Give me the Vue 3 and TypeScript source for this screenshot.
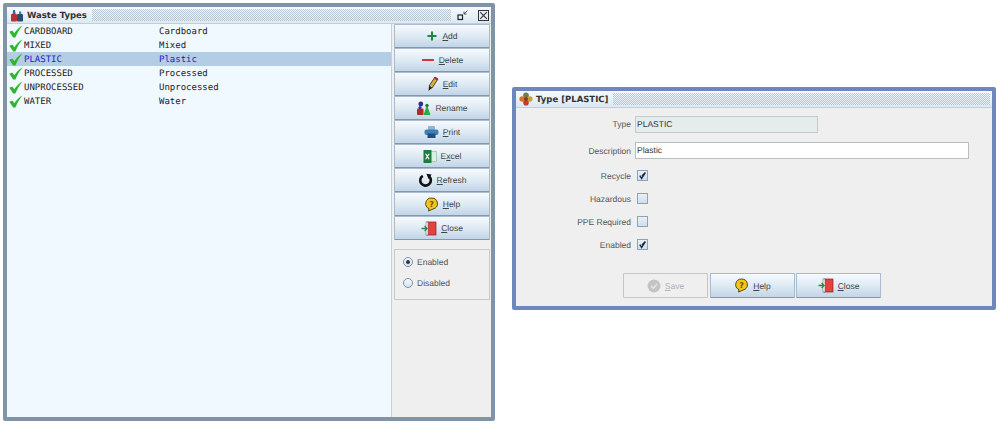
<script setup lang="ts">
interface WasteType {
  code: string
  description: string
}

const wasteTypes: WasteType[] = [
  { code: 'CARDBOARD', description: 'Cardboard' },
  { code: 'MIXED', description: 'Mixed' },
  { code: 'PLASTIC', description: 'Plastic' },
  { code: 'PROCESSED', description: 'Processed' },
  { code: 'UNPROCESSED', description: 'Unprocessed' },
  { code: 'WATER', description: 'Water' }
]

const sideButtons = [
  { id: 'add', pre: '', key: 'A', post: 'dd' },
  { id: 'delete', pre: '', key: 'D', post: 'elete' },
  { id: 'edit', pre: '', key: 'E', post: 'dit' },
  { id: 'rename', pre: 'Rename', key: '', post: '' },
  { id: 'print', pre: '', key: 'P', post: 'rint' },
  { id: 'excel', pre: 'E', key: 'x', post: 'cel' },
  { id: 'refresh', pre: '', key: 'R', post: 'efresh' },
  { id: 'help', pre: '', key: 'H', post: 'elp' },
  { id: 'close', pre: '', key: 'C', post: 'lose' }
]

const checks = [
  { label: 'Recycle', on: true },
  { label: 'Hazardous', on: false },
  { label: 'PPE Required', on: false },
  { label: 'Enabled', on: true }
]
</script>

<template>
  <div class="desktop">
    <section class="window list-window">
      <header class="titlebar">
        <svg class="title-icon" width="14" height="14" viewBox="0 0 14 14">
          <rect x="1" y="6" width="6" height="7.5" rx="1" fill="#b5322e" />
          <rect x="7" y="6" width="6" height="7.5" rx="1" fill="#27506f" />
          <path d="M2.5 6 L3.2 2 H5 L5.6 6 Z" fill="#2f6e9c" />
          <rect x="9" y="3.5" width="2.2" height="2.5" fill="#3c7ba6" />
        </svg>
        <span class="title-text">Waste Types</span>
        <span class="dots"></span>
        <svg class="ctl" width="12" height="12" viewBox="0 0 12 12">
          <rect x="1" y="6" width="4.5" height="4.5" fill="none" stroke="#222" stroke-width="1.2" />
          <path d="M7 5 L10.5 1.5 M7 2.5 V5 H9.5" fill="none" stroke="#444" stroke-width="0.9" />
        </svg>
        <svg class="ctl close-ctl" width="11" height="11" viewBox="0 0 11 11">
          <rect x="0.5" y="0.5" width="10" height="10" fill="#e8eef4" stroke="#333" />
          <path d="M2.2 2.2 L8.8 8.8 M8.8 2.2 L2.2 8.8" stroke="#333" stroke-width="1.1" />
        </svg>
      </header>
      <div class="list-body">
        <ul class="type-list">
          <li v-for="t in wasteTypes" :key="t.code" :class="['type-row', { selected: t.code === 'PLASTIC' }]">
            <svg class="tick" width="14" height="13" viewBox="0 0 14 13">
              <path d="M0.3 6.8 L3.2 5.4 L5.4 8.2 C7.4 5 9.8 2.4 13.4 0.4 C10.6 3.8 8.2 7.6 6.4 12.6 L4.2 12.6 Z" fill="#2fb62f" />
            </svg>
            <span class="code">{{ t.code }}</span>
            <span class="desc">{{ t.description }}</span>
          </li>
        </ul>
        <aside class="side">
          <button v-for="b in sideButtons" :key="b.id" class="btn side-btn" type="button">
            <svg v-if="b.id === 'add'" width="12" height="12" viewBox="0 0 12 12"><path d="M6 1.5 V10.5 M1.5 6 H10.5" stroke="#1c8a3a" stroke-width="2" /></svg>
            <svg v-else-if="b.id === 'delete'" width="14" height="12" viewBox="0 0 14 12"><path d="M1 6 H13" stroke="#d9333f" stroke-width="2" /></svg>
            <svg v-else-if="b.id === 'edit'" width="12" height="16" viewBox="0 0 12 16">
              <path d="M8 1 L11 3 L5 12 L2 10 Z" fill="#d8b23a" stroke="#222" stroke-width="0.8" />
              <path d="M8 1 L11 3 L10 4.6 L7 2.6 Z" fill="#b8282e" />
              <path d="M2 10 L5 12 L1.5 15 Z" fill="#222" />
            </svg>
            <svg v-else-if="b.id === 'rename'" width="15" height="15" viewBox="0 0 15 15">
              <circle cx="4.8" cy="3" r="2.4" fill="#2c2c9a" />
              <rect x="1" y="7.5" width="6.5" height="6.5" rx="1" fill="#b5262c" />
              <circle cx="4" cy="6.6" r="1.5" fill="#2c2c9a" />
              <path d="M11 4 L14.5 14 H7.5 Z" fill="#2aa84a" />
              <circle cx="11" cy="4.5" r="1.7" fill="#1c7d38" />
            </svg>
            <svg v-else-if="b.id === 'print'" width="15" height="14" viewBox="0 0 15 14">
              <rect x="4" y="1" width="7" height="4" rx="1" fill="#8fb3d1" />
              <rect x="0.5" y="4.5" width="14" height="5.5" rx="2" fill="#3f7fb5" />
              <rect x="3.5" y="8.5" width="8" height="4.5" fill="#1f4f7c" />
            </svg>
            <svg v-else-if="b.id === 'excel'" width="14" height="15" viewBox="0 0 14 15">
              <rect x="6" y="2.5" width="7.5" height="10" fill="#dbeee1" stroke="#7fbf95" stroke-width="0.6" />
              <rect x="0.5" y="1" width="8" height="13" fill="#1d7c41" />
              <path d="M2.6 4.8 L6.2 10.2 M6.2 4.8 L2.6 10.2" stroke="#fff" stroke-width="1.1" />
            </svg>
            <svg v-else-if="b.id === 'refresh'" width="15" height="15" viewBox="0 0 15 15">
              <path d="M4.8 2.8 A5.3 5.3 0 1 0 11.2 3.5" fill="none" stroke="#111" stroke-width="2.6" />
              <path d="M8.4 0.8 L13.6 1.4 L10.6 6 Z" fill="#111" />
            </svg>
            <svg v-else-if="b.id === 'help'" width="15" height="15" viewBox="0 0 15 15">
              <path d="M7.5 1 A6 5.6 0 0 1 9 12 L4.5 14 L5 11.6 A6 5.6 0 0 1 7.5 1 Z" fill="#f4c51f" stroke="#5a4708" stroke-width="1" />
              <text x="7.5" y="9.5" class="q">?</text>
            </svg>
            <svg v-else-if="b.id === 'close'" width="16" height="15" viewBox="0 0 16 15">
              <rect x="6" y="1" width="9" height="13" fill="#e5413f" stroke="#8e2220" stroke-width="0.7" />
              <rect x="5" y="1" width="2" height="13" fill="#fff" stroke="#555" stroke-width="0.5" />
              <path d="M0.5 7.5 H6 M3.6 5 L6 7.5 L3.6 10" fill="none" stroke="#2b8a3e" stroke-width="1.3" />
            </svg>
            <span class="btn-label">{{ b.pre }}<u v-if="b.key">{{ b.key }}</u>{{ b.post }}</span>
          </button>
          <div class="radio-box">
            <label class="radio-row"><span class="radio on"></span>Enabled</label>
            <label class="radio-row"><span class="radio"></span>Disabled</label>
          </div>
        </aside>
      </div>
    </section>

    <section class="window dialog-window">
      <header class="titlebar dialog-title">
        <svg class="title-icon" width="14" height="14" viewBox="0 0 14 14">
          <circle cx="7" cy="3.2" r="2.8" fill="#6d7f4b" />
          <circle cx="3.2" cy="7" r="2.8" fill="#d2762a" />
          <circle cx="10.8" cy="7" r="2.8" fill="#c9a032" />
          <circle cx="7" cy="10.8" r="2.8" fill="#c8382c" />
          <circle cx="7" cy="7" r="2" fill="#8c3a22" />
        </svg>
        <span class="title-text">Type [PLASTIC]</span>
        <span class="dots"></span>
      </header>
      <div class="dialog-body">
        <div class="field-row type-row-f">
          <span class="f-label">Type</span>
          <span class="readonly">PLASTIC</span>
        </div>
        <div class="field-row desc-row-f">
          <span class="f-label">Description</span>
          <span class="input">Plastic</span>
        </div>
        <div v-for="c in checks" :key="c.label" class="field-row check-row">
          <span class="f-label">{{ c.label }}</span>
          <span class="check">
            <svg v-if="c.on" width="9" height="9" viewBox="0 0 9 9"><path d="M1.8 4.6 L3.6 7.4 L7.4 1.6 L4 5" fill="none" stroke="#1d2a3a" stroke-width="1.4" /></svg>
          </span>
        </div>
        <div class="dialog-actions">
          <button class="btn action-btn disabled" type="button">
            <svg width="14" height="14" viewBox="0 0 14 14">
              <circle cx="7" cy="7" r="6.5" fill="#c4c4c4" />
              <path d="M4 7 L6.2 9.2 L10 5" fill="none" stroke="#e8e8e8" stroke-width="1.4" />
            </svg>
            <span class="btn-label"><u>S</u>ave</span>
          </button>
          <button class="btn action-btn" type="button">
            <svg width="15" height="15" viewBox="0 0 15 15">
              <path d="M7.5 1 A6 5.6 0 0 1 9 12 L4.5 14 L5 11.6 A6 5.6 0 0 1 7.5 1 Z" fill="#f4c51f" stroke="#5a4708" stroke-width="1" />
              <text x="7.5" y="9.5" class="q">?</text>
            </svg>
            <span class="btn-label"><u>H</u>elp</span>
          </button>
          <button class="btn action-btn" type="button">
            <svg width="16" height="15" viewBox="0 0 16 15">
              <rect x="6" y="1" width="9" height="13" fill="#e5413f" stroke="#8e2220" stroke-width="0.7" />
              <rect x="5" y="1" width="2" height="13" fill="#fff" stroke="#555" stroke-width="0.5" />
              <path d="M0.5 7.5 H6 M3.6 5 L6 7.5 L3.6 10" fill="none" stroke="#2b8a3e" stroke-width="1.3" />
            </svg>
            <span class="btn-label"><u>C</u>lose</span>
          </button>
        </div>
      </div>
    </section>
  </div>
</template>

<style>
html, body {
  margin: 0;
  background: #fff;
}
</style>

<style scoped>
.desktop {
  position: relative;
  width: 1000px;
  height: 424px;
  overflow: hidden;
  background: #fff;
  font-family: "Liberation Sans", Arial, sans-serif;
  font-size: 8.5px;
  color: #444;
  text-rendering: geometricPrecision;
}
.window {
  position: absolute;
  box-sizing: border-box;
  display: flex;
  flex-direction: column;
  border-radius: 2px;
}
.list-window {
  left: 3px;
  top: 3px;
  width: 492px;
  height: 418px;
  border: 4px solid #8193a7;
}
.dialog-window {
  left: 512px;
  top: 87px;
  width: 484px;
  height: 223px;
  border: 4px solid #6c88bf;
}
.titlebar {
  height: 17px;
  flex: none;
  display: flex;
  align-items: center;
  padding-left: 3px;
  background: linear-gradient(#f6fafd, #dce8f2);
  border-bottom: 1px solid #c4cdd6;
  box-sizing: border-box;
}
.title-icon {
  flex: none;
  margin-right: 3px;
}
.title-text {
  font-family: "DejaVu Sans", sans-serif;
  font-weight: 700;
  font-size: 8.5px;
  color: #333;
  white-space: nowrap;
  margin-right: 5px;
  padding-top: 2px;
}
.dots {
  flex: 1;
  align-self: stretch;
  margin: 2px 0;
  background: repeating-conic-gradient(#b9c8d6 0 25%, transparent 0 50%) 0 0 / 2px 2px;
}
.dialog-title .dots {
  margin-right: 2px;
}
.ctl {
  flex: none;
  margin-left: 6px;
}
.close-ctl {
  margin-left: 9px;
  margin-right: 2px;
}
.list-body {
  flex: 1;
  display: flex;
  min-height: 0;
}
.type-list {
  flex: 1;
  margin: 0;
  padding: 0;
  list-style: none;
  background: #f0f9ff;
  border-right: 1px solid #c9d0d6;
}
.type-row {
  box-sizing: border-box;
  height: 14px;
  display: flex;
  align-items: center;
  padding: 2px 0 0 2px;
  font-family: "DejaVu Sans Mono", monospace;
  font-size: 9px;
  color: #222;
  white-space: nowrap;
}
.type-row.selected {
  background: #b3cde4;
  color: #2420c8;
}
.tick {
  flex: none;
  margin: -2px 1px 0 0;
}
.code {
  width: 135px;
  flex: none;
}
.side {
  flex: none;
  width: 99px;
  box-sizing: border-box;
  background: #efeff0;
  padding-left: 2px;
}
.btn {
  box-sizing: border-box;
  display: flex;
  align-items: center;
  justify-content: center;
  gap: 4px;
  padding: 0;
  margin: 0;
  font-family: "Liberation Sans", Arial, sans-serif;
  font-size: 8.5px;
  color: #444;
  background: linear-gradient(#f6fafd, #e2ecf5 45%, #c2d5e7);
  border: 1px solid #a9bccf;
  border-bottom-color: #7f99b3;
  border-radius: 1px;
  text-rendering: geometricPrecision;
}
.btn u {
  text-underline-offset: 1px;
}
.side-btn {
  width: 96px;
  height: 24px;
}
.q {
  font-family: "DejaVu Sans", sans-serif;
  font-size: 8px;
  font-weight: 700;
  fill: #6a4e00;
  text-anchor: middle;
}
.radio-box {
  box-sizing: border-box;
  width: 96px;
  height: 51px;
  margin-top: 9px;
  padding: 5px 0 0 8px;
  display: flex;
  flex-direction: column;
  gap: 7px;
  background: #f0eff0;
  border: 1px solid #c9c9c9;
}
.radio-row {
  display: flex;
  align-items: center;
  gap: 4px;
  height: 14px;
  color: #555;
}
.radio {
  box-sizing: border-box;
  width: 10px;
  height: 10px;
  border-radius: 50%;
  border: 1px solid #7e93a8;
  background: linear-gradient(#f5f8fb, #d6e2ee);
  position: relative;
}
.radio.on::after {
  content: "";
  position: absolute;
  left: 2px;
  top: 2px;
  width: 4px;
  height: 4px;
  border-radius: 50%;
  background: #2a3545;
}
.dialog-body {
  flex: 1;
  display: flex;
  flex-direction: column;
  background: #efefef;
  padding-top: 7px;
  box-sizing: border-box;
  min-height: 0;
}
.field-row {
  display: flex;
  align-items: center;
  gap: 4px;
}
.f-label {
  width: 115px;
  flex: none;
  text-align: right;
  color: #555;
}
.type-row-f {
  height: 18px;
}
.desc-row-f {
  height: 17px;
  margin-top: 9px;
}
.readonly {
  box-sizing: border-box;
  width: 183px;
  height: 17px;
  line-height: 15px;
  padding-left: 1px;
  background: #e5ecec;
  border: 1px solid #c3cccc;
  color: #333;
}
.input {
  box-sizing: border-box;
  width: 334px;
  height: 17px;
  line-height: 15px;
  padding-left: 1px;
  background: #fff;
  border: 1px solid #b7bec4;
  color: #333;
}
.check-row {
  height: 23px;
}
.desc-row-f + .check-row {
  margin-top: 5px;
}
.check {
  box-sizing: border-box;
  width: 11px;
  height: 11px;
  margin-left: 2px;
  display: flex;
  align-items: center;
  justify-content: center;
  border: 1px solid #8ea3b8;
  background: linear-gradient(#e9f0f7, #cfdeec);
}
.dialog-actions {
  display: flex;
  gap: 1px;
  margin-top: 17px;
  margin-left: 107px;
}
.action-btn {
  width: 85px;
  height: 25px;
}
.action-btn.disabled {
  background: #efefef;
  border-color: #c6c6c6;
  color: #b0b0b0;
  margin-right: 1px;
}
</style>
